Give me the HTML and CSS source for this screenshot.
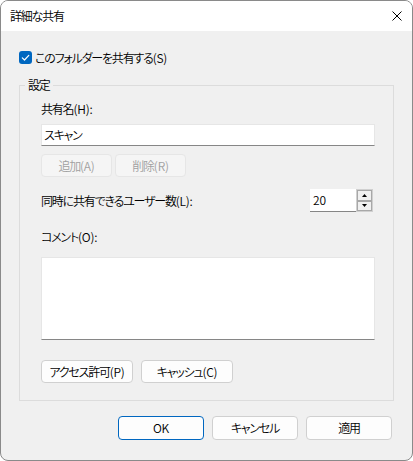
FILE: index.html
```html
<!DOCTYPE html>
<html lang="ja">
<head>
<meta charset="utf-8">
<title>詳細な共有</title>
<link rel="stylesheet" href="styles.css">
</head>
<body>
<div class="window">
  <div class="titlebar">
    <span class="title">詳細な共有</span>
    <svg class="close" viewBox="0 0 10 10" width="10" height="10"><path d="M0.5 0.5 L9.5 9.5 M9.5 0.5 L0.5 9.5" stroke="#000" stroke-width="1" fill="none"/></svg>
  </div>
  <div class="body">
    <label class="check-row">
      <span class="checkbox"><svg viewBox="0 0 13 13" width="13" height="13"><path d="M3.3 6.8 L5.5 9 L9.8 4.4" stroke="#fff" stroke-width="1.2" fill="none" stroke-linecap="round" stroke-linejoin="round"/></svg></span>
      <span>このフォルダーを共有する<span class="lat">(S)</span></span>
    </label>
    <fieldset class="group">
      <legend>設定</legend>
      <div class="label">共有名<span class="lat">(H):</span></div>
      <div class="textbox">スキャン</div>
      <div class="btn-row">
        <button class="btn btn-small" disabled>追加<span class="lat">(A)</span></button>
        <button class="btn btn-small" disabled>削除<span class="lat">(R)</span></button>
      </div>
      <div class="users-row">
        <span>同時に共有できるユーザー数<span class="lat">(L):</span></span>
        <div class="spinner">
          <div class="spin-input">20</div>
          <div class="spin-btns">
            <div class="spin-btn"><svg viewBox="0 0 5 3" width="5" height="3"><path d="M2.5 0 L5 3 L0 3 Z" fill="#000"/></svg></div>
            <div class="spin-btn"><svg viewBox="0 0 5 3" width="5" height="3"><path d="M0 0 L5 0 L2.5 3 Z" fill="#000"/></svg></div>
          </div>
        </div>
      </div>
      <div class="label comment-label">コメント<span class="lat">(O):</span></div>
      <div class="textarea"></div>
      <div class="btn-row perm-row">
        <button class="btn btn-wide">アクセス許可<span class="lat">(P)</span></button>
        <button class="btn btn-wide">キャッシュ<span class="lat">(C)</span></button>
      </div>
    </fieldset>
    <div class="footer">
      <button class="btn btn-dialog primary"><span class="lat">OK</span></button>
      <button class="btn btn-dialog">キャンセル</button>
      <button class="btn btn-dialog">適用</button>
    </div>
  </div>
</div>
</body>
</html>
```
FILE: styles.css
```css
html, body {
  margin: 0;
  padding: 0;
  background: #ffffff;
}
body {
  font-family: "Noto Sans CJK JP", "Noto Sans", sans-serif;
  font-size: 12px;
  font-weight: 350;
  font-feature-settings: "palt";
  letter-spacing: -1.2px;
  color: #000;
}
.lat {
  letter-spacing: -0.2px;
}
.window {
  width: 413px;
  height: 461px;
  box-sizing: border-box;
  border: 1px solid #8a8a8a;
  border-radius: 8px;
  overflow: hidden;
  background: #f0f0f0;
  display: flex;
  flex-direction: column;
}
.titlebar {
  height: 30px;
  flex: none;
  background: #ffffff;
  display: flex;
  align-items: center;
  justify-content: space-between;
  padding: 0 10px 0 9px;
}
.title {
  line-height: 16px;
}
.close {
  display: block;
}
.body {
  padding: 20px 18px 0 18px;
}
.check-row {
  display: flex;
  align-items: center;
  gap: 3px;
  height: 13px;
  line-height: 13px;
}
.checkbox {
  width: 13px;
  height: 13px;
  border-radius: 3px;
  background: #0067c0;
  display: flex;
  flex: none;
}
.group {
  margin: 14px 0 0 0;
  padding: 9px 18px 17px 21px;
  border: 1px solid #dcdcdc;
  min-width: 0;
}
.group legend {
  padding: 0 3px;
  margin-left: -16px;
  line-height: 14px;
}
.label {
  line-height: 16px;
}
.textbox {
  margin-top: 7px;
  height: 22px;
  box-sizing: border-box;
  background: #fff;
  border: 1px solid #e6e6e6;
  border-bottom-color: #868686;
  padding-left: 2px;
  line-height: 20px;
}
.btn-row {
  display: flex;
  gap: 3px;
  margin-top: 8px;
}
.btn {
  font: inherit;
  font-feature-settings: "palt";
  letter-spacing: -1.2px;
  color: #000;
  height: 23px;
  box-sizing: border-box;
  border: 1px solid #d0d0d0;
  border-radius: 4px;
  background: #fdfdfd;
  padding: 0;
  line-height: 20px;
}
.btn:disabled {
  color: #a0a0a0;
  background: #f5f5f5;
  border-color: #e6e6e6;
}
.btn-small {
  width: 71px;
}
.users-row {
  display: flex;
  align-items: center;
  justify-content: space-between;
  margin-top: 12px;
  padding-right: 2px;
  height: 23px;
}
.spinner {
  display: flex;
  height: 23px;
}
.spin-input {
  width: 46px;
  box-sizing: border-box;
  background: #fff;
  border-bottom: 1px solid #868686;
  padding-left: 3px;
  line-height: 22px;
  letter-spacing: 0;
}
.spin-btns {
  width: 17px;
  box-sizing: border-box;
  border: 1px solid #d0d0d0;
  display: flex;
  flex-direction: column;
}
.spin-btn {
  flex: 1;
  border: 1px solid #a8a8a8;
  background: #f0f0f0;
  display: flex;
  align-items: center;
  justify-content: center;
}
.spin-btn svg {
  display: block;
}
.comment-label {
  margin-top: 17px;
}
.textarea {
  margin-top: 12px;
  height: 83px;
  box-sizing: border-box;
  background: #fff;
  border: 1px solid #e6e6e6;
  border-bottom-color: #868686;
}
.perm-row {
  margin-top: 20px;
  gap: 8px;
}
.btn-wide {
  width: 92px;
}
.footer {
  display: flex;
  justify-content: flex-end;
  gap: 8px;
  margin-top: 15px;
  padding-right: 2px;
}
.btn-dialog {
  width: 86px;
  height: 24px;
}
.primary {
  border-color: #0067c0;
}
```
